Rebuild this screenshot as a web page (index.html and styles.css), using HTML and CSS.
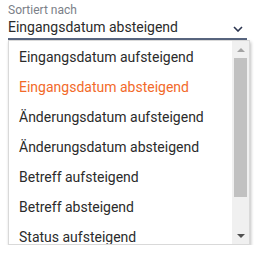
FILE: index.html
```html
<!DOCTYPE html>
<html lang="de">
<head>
  <meta charset="UTF-8" />
  <title>Sortierung</title>
  <link rel="stylesheet" href="styles.css">
</head>
<body>
  <div class="sort-field">
    <label class="sort-label">Sortiert nach</label>
    <div class="sort-select">
      <span class="sort-value">Eingangsdatum absteigend</span>
      <svg class="chevron" width="10" height="6" viewBox="0 0 10 6">
        <path d="M1 1 L5 5 L9 1" fill="none" stroke="#2c3550" stroke-width="1.6" />
      </svg>
    </div>
    <div class="sort-menu">
      <ul class="sort-options">
        <li>Eingangsdatum aufsteigend</li>
        <li class="active">Eingangsdatum absteigend</li>
        <li>Änderungsdatum aufsteigend</li>
        <li>Änderungsdatum absteigend</li>
        <li>Betreff aufsteigend</li>
        <li>Betreff absteigend</li>
        <li>Status aufsteigend</li>
        <li>Status absteigend</li>
      </ul>
      <div class="scrollbar">
        <div class="arrow up"></div>
        <div class="track"><div class="thumb"></div></div>
        <div class="arrow down"></div>
      </div>
    </div>
  </div>
</body>
</html>
```

FILE: styles.css
```css
body {
  margin: 0;
  font-family: Roboto, 'Liberation Sans', sans-serif;
  background: #fff;
  color: #2b2b2b;
}
.sort-field {
  padding: 3px 0 0 8px;
  width: 239px;
}
.sort-label {
  display: block;
  font-size: 12px;
  line-height: 15px;
  color: #7b8088;
}
.sort-select {
  display: flex;
  align-items: center;
  justify-content: space-between;
  height: 19px;
  padding-bottom: 1px;
  border-bottom: 2px solid #58657f;
}
.sort-value {
  font-size: 14px;
  line-height: 19px;
}
.chevron {
  margin-right: 4px;
  margin-top: 3px;
}
.sort-menu {
  width: 240px;
  height: 203px;
  display: flex;
  background: #fff;
  border: 1px solid #d9d9d9;
  box-shadow: 1px 2px 3px rgba(0, 0, 0, 0.25);
  overflow: hidden;
}
.sort-options {
  flex: 1;
  list-style: none;
  margin: 0;
  padding: 1px 0 0;
}
.sort-options li {
  height: 30px;
  line-height: 30px;
  padding-left: 10px;
  font-size: 14px;
  white-space: nowrap;
}
.sort-options li.active {
  color: #f26a2a;
}
.scrollbar {
  width: 17px;
  display: flex;
  flex-direction: column;
  background: #f0f0f0;
}
.track {
  flex: 1;
  padding: 0 2px;
}
.thumb {
  height: 139px;
  background: #c1c1c1;
}
.arrow {
  height: 17px;
  display: flex;
  align-items: center;
  justify-content: center;
}
.arrow::after {
  content: '';
  border-left: 4px solid transparent;
  border-right: 4px solid transparent;
}
.arrow.up::after {
  border-bottom: 4px solid #a3a3a3;
}
.arrow.down::after {
  border-top: 4px solid #505050;
}
```
